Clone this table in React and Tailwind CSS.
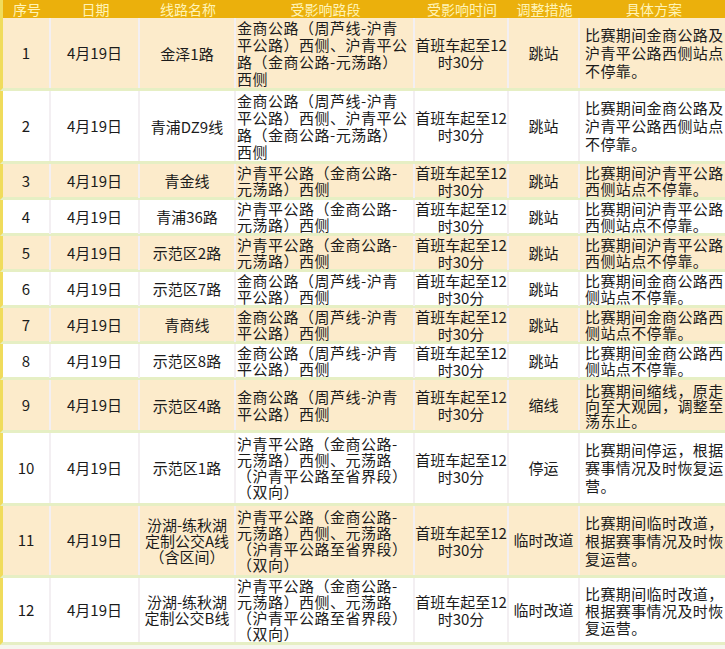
import React from "react";

const COLS = "grid grid-cols-[48px_89px_96px_179px_94px_71px_148px]";

const sect1 = ["金商公路（周芦线-沪青", "平公路）西侧、沪青平公", "路（金商公路-元荡路）", "西侧"];
const sect2 = ["沪青平公路（金商公路-", "元荡路）西侧"];
const sect3 = ["金商公路（周芦线-沪青", "平公路）西侧"];
const sect4 = ["沪青平公路（金商公路-", "元荡路）西侧、元荡路", "（沪青平公路至省界段）", "（双向）"];

const plan1 = ["比赛期间金商公路及", "沪青平公路西侧站点", "不停靠。"];
const plan2 = ["比赛期间沪青平公路", "西侧站点不停靠。"];
const plan3 = ["比赛期间金商公路西", "侧站点不停靠。"];
const plan4 = ["比赛期间临时改道，", "根据赛事情况及时恢", "复运营。"];

const rows = [
  { no: "1", line: ["金泽1路"], sect: sect1, act: "跳站", plan: plan1, h: "h-[73px]", lh: "leading-[17px]", plh: "leading-[18px]" },
  { no: "2", line: ["青浦DZ9线"], sect: sect1, act: "跳站", plan: plan1, h: "h-[73px]", lh: "leading-[17px]", plh: "leading-[18px]" },
  { no: "3", line: ["青金线"], sect: sect2, act: "跳站", plan: plan2, h: "h-[36px]", lh: "leading-[16px]", plh: "leading-[16px]" },
  { no: "4", line: ["青浦36路"], sect: sect2, act: "跳站", plan: plan2, h: "h-[36px]", lh: "leading-[16px]", plh: "leading-[16px]" },
  { no: "5", line: ["示范区2路"], sect: sect2, act: "跳站", plan: plan2, h: "h-[36px]", lh: "leading-[16px]", plh: "leading-[16px]" },
  { no: "6", line: ["示范区7路"], sect: sect3, act: "跳站", plan: plan3, h: "h-[36px]", lh: "leading-[16px]", plh: "leading-[16px]" },
  { no: "7", line: ["青商线"], sect: sect3, act: "跳站", plan: plan3, h: "h-[36px]", lh: "leading-[16px]", plh: "leading-[16px]" },
  { no: "8", line: ["示范区8路"], sect: sect3, act: "跳站", plan: plan3, h: "h-[36px]", lh: "leading-[16px]", plh: "leading-[16px]" },
  { no: "9", line: ["示范区4路"], sect: sect3, act: "缩线", plan: ["比赛期间缩线，原走", "向至大观园，调整至", "荡东止。"], h: "h-[53px]", lh: "leading-[17px]", plh: "leading-[15px]" },
  { no: "10", line: ["示范区1路"], sect: sect4, act: "停运", plan: ["比赛期间停运，根据", "赛事情况及时恢复运", "营。"], h: "h-[73px]", lh: "leading-[16px]", plh: "leading-[18px]" },
  { no: "11", line: ["汾湖-练秋湖", "定制公交A线", "（含区间）"], sect: sect4, act: "临时改道", plan: plan4, h: "h-[72px]", lh: "leading-[16px]", plh: "leading-[18px]" },
  { no: "12", line: ["汾湖-练秋湖", "定制公交B线"], sect: sect4, act: "临时改道", plan: plan4, h: "h-[67px]", lh: "leading-[16px]", plh: "leading-[17px]" },
];

const headers = ["序号", "日期", "线路名称", "受影响路段", "受影响时间", "调整措施", "具体方案"];

const Lines = ({ items }) => items.map((t, i) => <div key={i} className="whitespace-nowrap">{t}</div>);

const App = () => {
  return (
    <div className="w-[725px] h-[649px] bg-[#f6f6ee] overflow-hidden text-[15px] text-[#1b1b1b] font-['Noto_Sans_CJK_SC',sans-serif]">
      {/* header */}
      <div className={`${COLS} h-[18px] bg-[#ebb00c] text-[#fff4b8] text-[14px] leading-[18px] text-center border-l-[3px] border-[#f0dc5c]`}>
        {headers.map((h) => (
          <div key={h} className="whitespace-nowrap">{h}</div>
        ))}
      </div>

      {rows.map((r, i) => (
        <div
          key={r.no}
          className={`${COLS} ${r.h} border-b-[3px] border-b-[#e6efc4] border-l-[3px] border-l-[#f0dc5c] ${i % 2 === 0 ? "bg-[#fcebcb]" : "bg-white"}`}
        >
          <div className="flex items-center justify-center border-r-2 border-r-[#f3eff2]">{r.no}</div>
          <div className="flex items-center justify-center border-r-2 border-r-[#f3eff2]">4月19日</div>
          <div className={`flex flex-col items-center justify-center text-center border-r-2 border-r-[#f3eff2] ${r.lh}`}>
            <Lines items={r.line} />
          </div>
          <div className={`flex flex-col justify-center pl-[1px] tracking-[0.5px] border-r-2 border-r-[#f3eff2] ${r.lh}`}>
            <Lines items={r.sect} />
          </div>
          <div className="flex flex-col items-center justify-center text-center leading-[17px] border-r-2 border-r-[#f3eff2]">
            <div className="whitespace-nowrap">首班车起至12</div>
            <div className="whitespace-nowrap">时30分</div>
          </div>
          <div className="flex items-center justify-center whitespace-nowrap border-r-2 border-r-[#f3eff2]">{r.act}</div>
          <div className={`flex flex-col justify-center pl-[5px] tracking-[0.4px] ${r.plh}`}>
            <Lines items={r.plan} />
          </div>
        </div>
      ))}
    </div>
  );
};

export default App;
